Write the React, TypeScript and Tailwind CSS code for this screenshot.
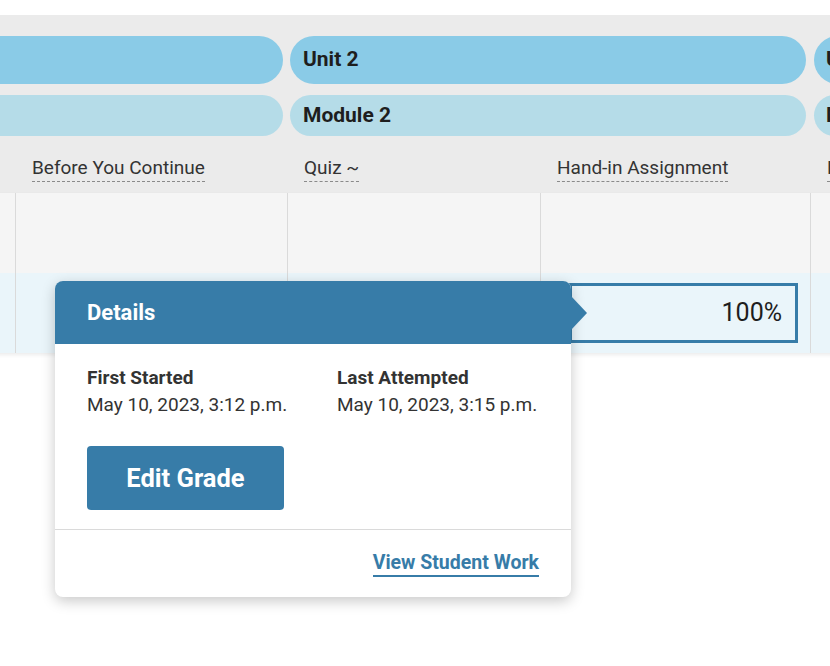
import React from "react";

const cols = "grid grid-cols-[272px_272px_253px_270px_270px]";

function HeaderLabel({ text }: { text: string }) {
  return (
    <div className="border-l border-transparent pl-[16px] pt-[21px] pb-[12px]">
      <span className="text-[19px] leading-[21px] text-[#333] border-b border-dashed border-[#8a8a8a] pb-[2px] whitespace-nowrap">
        {text}
      </span>
    </div>
  );
}

export default function App() {
  return (
    <div
      className="relative w-[830px] h-[666px] overflow-hidden bg-white"
      style={{ fontFamily: "Roboto, 'Noto Sans', sans-serif" }}
    >
      <div className="h-[15px]" />
      <div className="ml-[-257px] w-max">
        {/* header block */}
        <div className="bg-[#ebebeb] pt-[21px]">
          <div className={cols}>
            <div className="col-span-2 pl-[3px] pr-[4px]">
              <div className="h-[48px] rounded-full bg-[#8acbe7] flex items-center pl-[13px] text-[21px] font-bold text-[#1e1e1e]">
                Unit 1
              </div>
            </div>
            <div className="col-span-2 pl-[3px] pr-[4px]">
              <div className="h-[48px] rounded-full bg-[#8acbe7] flex items-center pl-[13px] text-[21px] font-bold text-[#1e1e1e]">
                Unit 2
              </div>
            </div>
            <div className="pl-[4px] pr-[4px]">
              <div className="h-[48px] rounded-full bg-[#8acbe7] flex items-center pl-[12px] text-[21px] font-bold text-[#1e1e1e]">
                Unit 3
              </div>
            </div>
          </div>
          <div className={cols + " mt-[11px]"}>
            <div className="col-span-2 pl-[3px] pr-[4px]">
              <div className="h-[41px] rounded-full bg-[#b5dce8] flex items-center pl-[13px] text-[21px] font-bold text-[#1e1e1e]">
                Module 1
              </div>
            </div>
            <div className="col-span-2 pl-[3px] pr-[4px]">
              <div className="h-[41px] rounded-full bg-[#b5dce8] flex items-center pl-[13px] text-[21px] font-bold text-[#1e1e1e]">
                Module 2
              </div>
            </div>
            <div className="pl-[4px] pr-[4px]">
              <div className="h-[41px] rounded-full bg-[#b5dce8] flex items-center pl-[12px] text-[21px] font-bold text-[#1e1e1e]">
                Module 3
              </div>
            </div>
          </div>
          <div className={cols}>
            <HeaderLabel text="Introduction" />
            <HeaderLabel text="Before You Continue" />
            <HeaderLabel text="Quiz ~" />
            <HeaderLabel text="Hand-in Assignment" />
            <HeaderLabel text="Lesson Review" />
          </div>
        </div>

        {/* body rows */}
        <div className="shadow-[0_2px_4px_rgba(0,0,0,0.08)]">
          <div className={cols + " bg-[#f5f5f5]"}>
            <div className="h-[80px] border-l border-[#dadada]" />
            <div className="h-[80px] border-l border-[#dadada]" />
            <div className="h-[80px] border-l border-[#dadada]" />
            <div className="h-[80px] border-l border-[#dadada]" />
            <div className="h-[80px] border-l border-[#dadada]" />
          </div>
          <div className={cols + " bg-[#eaf5fa]"}>
            <div className="h-[80px] border-l border-[#dadada]" />
            <div className="h-[80px] border-l border-[#dadada]" />
            <div className="h-[80px] border-l border-[#dadada]" />
            <div className="h-[80px] border-l border-[#dadada] pl-[28px] pr-[12px] py-[10px]">
              <div className="h-full border-[3px] border-[#377ca8] flex items-center justify-end pr-[13px] text-[25px] text-[#1e1e1e]">
                100%
              </div>
            </div>
            <div className="h-[80px] border-l border-[#dadada]" />
          </div>
        </div>
      </div>

      {/* popover */}
      <div className="absolute left-[55px] top-[281px] w-[516px] rounded-[8px] bg-white shadow-[0_4px_14px_rgba(0,0,0,0.22)]">
        <div className="relative h-[63px] rounded-t-[8px] bg-[#377ca8] flex items-center pl-[32px] text-[22px] font-bold text-white">
          Details
          <div className="absolute right-[-16px] top-[15px] w-0 h-0 border-y-[17px] border-y-transparent border-l-[16px] border-l-[#377ca8]" />
        </div>
        <div className="px-[32px] pt-[20px] pb-[19px]">
          <div className="flex">
            <div className="w-[250px]">
              <div className="text-[19px] leading-[27px] font-bold text-[#333]">First Started</div>
              <div className="text-[19px] leading-[27px] text-[#333]">May 10, 2023, 3:12 p.m.</div>
            </div>
            <div>
              <div className="text-[19px] leading-[27px] font-bold text-[#333]">Last Attempted</div>
              <div className="text-[19px] leading-[27px] text-[#333]">May 10, 2023, 3:15 p.m.</div>
            </div>
          </div>
          <button className="block mt-[28px] w-[197px] h-[64px] rounded-[4px] bg-[#377ca8] text-white text-[25.5px] font-bold">
            Edit Grade
          </button>
        </div>
        <div className="border-t border-[#dadada] px-[32px] pt-[21px] pb-[20px] flex justify-end">
          <a className="text-[19.5px] leading-[24px] font-bold text-[#377ca8] border-b-2 border-[#377ca8]">
            View Student Work
          </a>
        </div>
      </div>
    </div>
  );
}
